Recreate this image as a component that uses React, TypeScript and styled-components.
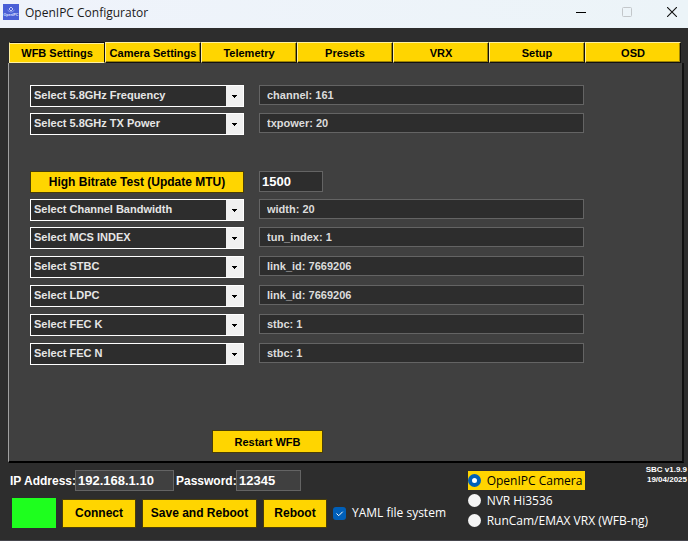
import React, { useState } from "react";
import styled, { createGlobalStyle } from "styled-components";

const YELLOW = "#ffd500";
const DARK = "#2d2d2d";
const PANEL = "#404040";
const UI = `"Open Sans", "Noto Sans", sans-serif`;

const GlobalStyle = createGlobalStyle`
  * { box-sizing: border-box; }
  html { height: 100%; }
  body { margin: 0; min-height: 100%; background: ${DARK}; }
  button, input, select { font: inherit; margin: 0; border-radius: 0; }
`;

const Window = styled.div`
  display: flex;
  flex-direction: column;
  min-height: 100vh;
  background: ${DARK};
  font: bold 11px/14px "Liberation Sans", Arial, sans-serif;
  color: #e6e6e6;
`;

const TitleBar = styled.header`
  display: flex;
  align-items: center;
  height: 28px;
  padding: 0 4px 4px 3px;
  background: linear-gradient(90deg, #eff3fb, #ecf4f8);
`;

const Title = styled.h1`
  flex: 1;
  margin: 0 0 0 6px;
  padding-top: 2px;
  font: 12px/16px ${UI};
  color: #1a1a1a;
`;

const WindowButton = styled.button`
  display: grid;
  place-items: center;
  width: 46px;
  height: 24px;
  padding: 0;
  border: 0;
  background: none;
  &:last-child { width: 24px; margin-left: 10px; }
`;

const Main = styled.main`
  padding: 14px 4px 0 8px;
`;

const TabBar = styled.nav`
  display: grid;
  grid-template-columns: repeat(7, 1fr);
  padding: 0 3px 0 1px;
`;

const Tab = styled.button<{ $active: boolean }>`
  height: 21px;
  padding: 0;
  white-space: nowrap;
  color: #000;
  background: ${YELLOW};
  border: solid;
  border-width: 1px;
  border-color: ${(p) => (p.$active ? "#111 #111 #fff0a0 #fff0a0" : "#fff0a0 #111 #111 #fff0a0")};
  box-shadow: ${(p) => (p.$active ? "inset 0 1px #fff0a0" : "inset -1px -1px #a08600")};
`;

const Panel = styled.section`
  display: flex;
  flex-direction: column;
  min-height: 400px;
  padding: 22px 98px 8px 21px;
  background: ${PANEL};
  border: solid;
  border-width: 0 2px 2px 1px;
  border-color: #000 #111 #000 #a0a0a0;
`;

const Group = styled.div<{ $gap: number; $before: number }>`
  display: grid;
  gap: ${(p) => p.$gap}px;
  margin-top: ${(p) => p.$before}px;
`;

const Row = styled.div`
  display: grid;
  grid-template-columns: 214px 1fr;
  column-gap: 15px;
  height: 22px;
`;

const SelectBox = styled.div`
  position: relative;
  height: 22px;
`;

const Select = styled.select`
  appearance: none;
  width: 100%;
  height: 22px;
  padding: 0 20px 2px 3px;
  border: 1px solid #fff;
  outline: 0;
  color: #e6e6e6;
  background: ${DARK};
`;

const Arrow = styled.span`
  position: absolute;
  inset: 1px 1px 1px auto;
  display: grid;
  place-items: center;
  width: 17px;
  background: #f0f0f0;
  pointer-events: none;
`;

const Field = styled.input<{ $w?: number; $large?: boolean; $light?: boolean }>`
  width: ${(p) => (p.$w ? p.$w + "px" : "100%")};
  height: ${(p) => (p.$large ? 21 : 20)}px;
  padding: ${(p) => (p.$large ? "0 2px 1px" : "0 7px 1px")};
  border: 1px solid #646464;
  outline: 0;
  color: ${(p) => (p.$large ? "#fff" : "#dcdcdc")};
  background: ${(p) => (p.$light ? PANEL : DARK)};
  ${(p) => p.$large && "font-size: 13px;"}
`;

const ActionButton = styled.button<{ $w?: number; $h: number; $size?: number }>`
  width: ${(p) => (p.$w ? p.$w + "px" : "100%")};
  height: ${(p) => p.$h}px;
  padding: 0;
  font-size: ${(p) => p.$size ?? 12}px;
  white-space: nowrap;
  color: #000;
  background: ${YELLOW};
  border: 1px solid #4a3e08;
`;

const Restart = styled.div`
  margin: auto 0 0 182px;
  display: flex;
`;

const Footer = styled.footer`
  display: flex;
  justify-content: space-between;
  flex: 1;
  padding: 2px 1px 10px 10px;
`;

const Connection = styled.div`
  display: grid;
  align-content: start;
  gap: 7px;
  padding-top: 5px;
`;

const Credentials = styled.div`
  display: flex;
  align-items: center;
  font-size: 12px;
  color: #fff;
`;

const Label = styled.label<{ $w: number; $before?: number }>`
  width: ${(p) => p.$w}px;
  margin-left: ${(p) => p.$before ?? 0}px;
  white-space: nowrap;
`;

const Actions = styled.div`
  display: flex;
  align-items: center;
  gap: 6px;
  padding-left: 2px;
`;

const Status = styled.div`
  width: 44px;
  height: 30px;
  background: #1eff1e;
`;

const CheckLabel = styled.label`
  display: flex;
  align-items: center;
  gap: 6px;
  font: 12px/18px ${UI};
  color: #fff;
  white-space: nowrap;
`;

const Check = styled.input`
  appearance: none;
  width: 13px;
  height: 13px;
  border-radius: 3px;
  background: #f3f3f3;
  &:checked {
    background: #005fb8 url("data:image/svg+xml,%3Csvg xmlns='http://www.w3.org/2000/svg' viewBox='0 0 13 13'%3E%3Cpath d='M3.5 6.5 5.7 8.7 9.7 4.7' fill='none' stroke='white'/%3E%3C/svg%3E");
  }
`;

const Devices = styled.fieldset`
  display: grid;
  justify-items: start;
  align-content: start;
  gap: 1px;
  width: 178px;
  min-width: 0;
  margin: 0;
  padding: 6px 0 0;
  border: 0;
`;

const Device = styled.label<{ $on: boolean }>`
  display: flex;
  align-items: center;
  gap: 6px;
  height: 19px;
  padding-right: 3px;
  font: 12px/19px ${UI};
  white-space: nowrap;
  color: ${(p) => (p.$on ? "#000" : "#fff")};
  background: ${(p) => (p.$on ? YELLOW : "transparent")};
`;

const Radio = styled.input`
  appearance: none;
  width: 13px;
  height: 13px;
  border-radius: 50%;
  background: #f3f3f3;
  &:checked { background: #fff; border: 4px solid #005fb8; }
`;

const Right = styled.div`
  display: flex;
`;

const Version = styled.p`
  margin: 0;
  font-size: 8px;
  line-height: 10px;
  text-align: right;
  white-space: nowrap;
  color: #fff;
`;

const Edge = styled.div`
  flex: none;
  height: 3px;
  border-top: 1px solid #45454c;
  background: linear-gradient(90deg, #2c2f4c 0 40%, #2a2633 58%, #1c1a1e 60%, #85837f 61% 96%, #45433f 97%);
`;

const tabs = ["WFB Settings", "Camera Settings", "Telemetry", "Presets", "VRX", "Setup", "OSD"];
const radioRows = [
  ["Select 5.8GHz Frequency", "channel: 161"],
  ["Select 5.8GHz TX Power", "txpower: 20"],
];
const linkRows = [
  ["Select Channel Bandwidth", "width: 20"],
  ["Select MCS INDEX", "tun_index: 1"],
];
const codingRows = [
  ["Select STBC", "link_id: 7669206"],
  ["Select LDPC", "link_id: 7669206"],
  ["Select FEC K", "stbc: 1"],
  ["Select FEC N", "stbc: 1"],
];
const devices = ["OpenIPC Camera", "NVR Hi3536", "RunCam/EMAX VRX (WFB-ng)"];

function Setting({ name, value }: { name: string; value: string }) {
  return (
    <Row>
      <SelectBox>
        <Select aria-label={name}>
          <option>{name}</option>
        </Select>
        <Arrow>
          <svg width="5" height="3" viewBox="0 0 5 3" shapeRendering="crispEdges">
            <path d="M0 0h5v1h-1v1h-1v1h-1v-1h-1v-1h-1z" fill="#000" />
          </svg>
        </Arrow>
      </SelectBox>
      <Field aria-label={name + " value"} defaultValue={value} readOnly />
    </Row>
  );
}

export default function App() {
  const [tab, setTab] = useState(tabs[0]);
  const [device, setDevice] = useState(devices[0]);
  const list = (rows: string[][]) => rows.map(([n, v]) => <Setting key={n} name={n} value={v} />);

  return (
    <Window>
      <GlobalStyle />
      <TitleBar>
        <svg width="16" height="16" viewBox="0 0 16 16">
          <rect width="16" height="16" fill="#4a5fd6" />
          <path d="M8 3 10 5 8 7 6 5z" fill="none" stroke="#dfe5ff" strokeWidth="0.8" />
          <path d="M4.5 6Q8 10 11.5 6" fill="none" stroke="#aab6f2" strokeWidth="0.7" />
          <text x="8" y="12" textAnchor="middle" fontSize="3.5" fill="#dfe5ff" fontFamily="Liberation Sans" fontWeight="bold">OpenIPC</text>
        </svg>
        <Title>OpenIPC Configurator</Title>
        <WindowButton aria-label="Minimize">
          <svg width="10" height="10"><path d="M0 5.5h10" stroke="#000" /></svg>
        </WindowButton>
        <WindowButton aria-label="Maximize" disabled>
          <svg width="10" height="10"><rect x=".5" y=".5" width="9" height="9" rx="1" fill="none" stroke="#c3c7ca" /></svg>
        </WindowButton>
        <WindowButton aria-label="Close">
          <svg width="10" height="10"><path d="M0 0 10 10M10 0 0 10" stroke="#111" strokeWidth="1.1" /></svg>
        </WindowButton>
      </TitleBar>
      <Main>
        <TabBar>
          {tabs.map((t) => (
            <Tab key={t} $active={t === tab} onClick={() => setTab(t)}>{t}</Tab>
          ))}
        </TabBar>
        <Panel>
          <Group $gap={6} $before={0}>{list(radioRows)}</Group>
          <Group $gap={6} $before={36}>
            <Row>
              <ActionButton $h={22}>High Bitrate Test (Update MTU)</ActionButton>
              <Field $large $w={64} aria-label="MTU" defaultValue="1500" />
            </Row>
            {list(linkRows)}
          </Group>
          <Group $gap={7} $before={7}>{list(codingRows)}</Group>
          <Restart>
            <ActionButton $w={111} $h={23} $size={11}>Restart WFB</ActionButton>
          </Restart>
        </Panel>
      </Main>
      <Footer>
        <Connection>
          <Credentials>
            <Label $w={65} htmlFor="ip">IP Address:</Label>
            <Field id="ip" $large $light $w={99} defaultValue="192.168.1.10" />
            <Label $w={60} $before={2} htmlFor="pw">Password:</Label>
            <Field id="pw" $large $light $w={65} defaultValue="12345" />
          </Credentials>
          <Actions>
            <Status role="status" aria-label="Connected" />
            <ActionButton $w={74} $h={29}>Connect</ActionButton>
            <ActionButton $w={115} $h={29}>Save and Reboot</ActionButton>
            <ActionButton $w={64} $h={29}>Reboot</ActionButton>
            <CheckLabel>
              <Check type="checkbox" defaultChecked />
              YAML file system
            </CheckLabel>
          </Actions>
        </Connection>
        <Right>
          <Devices aria-label="Device">
            {devices.map((d) => (
              <Device key={d} $on={d === device}>
                <Radio type="radio" name="device" checked={d === device} onChange={() => setDevice(d)} />
                {d}
              </Device>
            ))}
          </Devices>
          <Version>SBC v1.9.9<br />19/04/2025</Version>
        </Right>
      </Footer>
      <Edge />
    </Window>
  );
}
